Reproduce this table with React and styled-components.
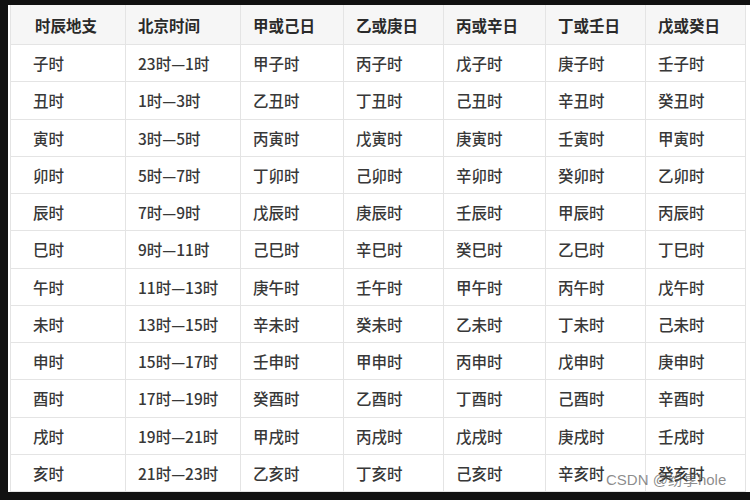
import React from 'react';
import styled, { createGlobalStyle } from 'styled-components';

const GlobalStyle = createGlobalStyle`
  html, body { margin: 0; padding: 0; background: #fff; }
  body { font-family: "Noto Sans CJK SC", "Noto Sans", sans-serif; }
`;

const headers = ['时辰地支', '北京时间', '甲或己日', '乙或庚日', '丙或辛日', '丁或壬日', '戊或癸日'];
const widths = [115, 115, 103, 100, 102, 100, 100];

const rows = [
  ['子时', '23时—1时', '甲子时', '丙子时', '戊子时', '庚子时', '壬子时'],
  ['丑时', '1时—3时', '乙丑时', '丁丑时', '己丑时', '辛丑时', '癸丑时'],
  ['寅时', '3时—5时', '丙寅时', '戊寅时', '庚寅时', '壬寅时', '甲寅时'],
  ['卯时', '5时—7时', '丁卯时', '己卯时', '辛卯时', '癸卯时', '乙卯时'],
  ['辰时', '7时—9时', '戊辰时', '庚辰时', '壬辰时', '甲辰时', '丙辰时'],
  ['巳时', '9时—11时', '己巳时', '辛巳时', '癸巳时', '乙巳时', '丁巳时'],
  ['午时', '11时—13时', '庚午时', '壬午时', '甲午时', '丙午时', '戊午时'],
  ['未时', '13时—15时', '辛未时', '癸未时', '乙未时', '丁未时', '己未时'],
  ['申时', '15时—17时', '壬申时', '甲申时', '丙申时', '戊申时', '庚申时'],
  ['酉时', '17时—19时', '癸酉时', '乙酉时', '丁酉时', '己酉时', '辛酉时'],
  ['戌时', '19时—21时', '甲戌时', '丙戌时', '戊戌时', '庚戌时', '壬戌时'],
  ['亥时', '21时—23时', '乙亥时', '丁亥时', '己亥时', '辛亥时', '癸亥时'],
];

export default function App() {
  return (
    <>
      <GlobalStyle />
      <Frame>
        <Panel>
          <Table>
            <colgroup>
              {widths.map((w, i) => (
                <col key={i} style={{ width: w }} />
              ))}
            </colgroup>
            <thead>
              <tr>
                {headers.map((h, i) => (
                  <Th key={h} $first={i === 0}>{h}</Th>
                ))}
              </tr>
            </thead>
            <tbody>
              {rows.map((r) => (
                <tr key={r[0]}>
                  {r.map((c, i) => (
                    <Td key={i} $first={i === 0}>{c}</Td>
                  ))}
                </tr>
              ))}
            </tbody>
          </Table>
          <Watermark>CSDN @纷享hole</Watermark>
        </Panel>
      </Frame>
    </>
  );
}

const Frame = styled.div`
  width: 750px;
  height: 500px;
  box-sizing: border-box;
  background: #111;
  padding: 5px 0 8px 8px;
  overflow: hidden;
`;

const Panel = styled.div`
  position: relative;
  height: 100%;
  background: #fff;
  padding-left: 2px;
  box-sizing: border-box;
`;

const Table = styled.table`
  border-collapse: collapse;
  table-layout: fixed;
  width: 735px;
  height: 487px;
`;

const Th = styled.th`
  height: 39px;
  padding: 0 0 0 ${(p) => (p.$first ? '24px' : '12px')};
  text-align: left;
  font-size: 15.5px;
  font-weight: 700;
  color: #2a2a2a;
  background: #f6f6f6;
  border: 1px solid #e4e4e4;
  border-top: none;
  white-space: nowrap;
`;

const Td = styled.td`
  padding: 0 0 0 ${(p) => (p.$first ? '22px' : '12px')};
  font-size: 15.5px;
  font-weight: 500;
  color: #383838;
  border: 1px solid #e4e4e4;
  white-space: nowrap;
`;

const Watermark = styled.div`
  position: absolute;
  left: 598px;
  bottom: 3px;
  font-family: "Liberation Sans", "Noto Sans CJK SC", sans-serif;
  font-size: 15px;
  color: rgba(90, 90, 90, 0.7);
  white-space: nowrap;
`;
